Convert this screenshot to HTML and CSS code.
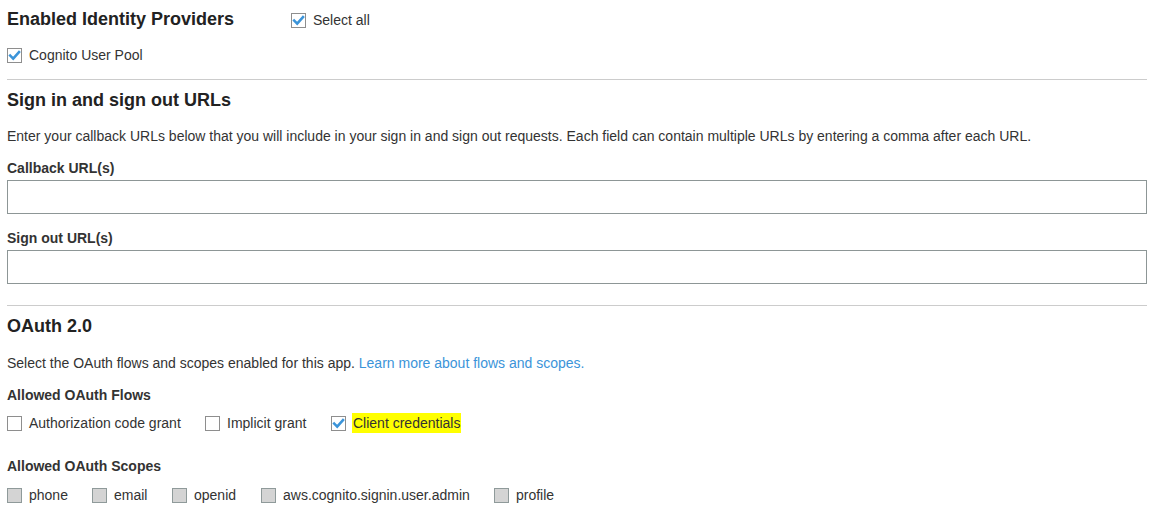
FILE: index.html
```html
<!DOCTYPE html>
<html>
<head>
<meta charset="utf-8">
<link rel="stylesheet" href="styles.css">
</head>
<body>
<div class="page">
  <section class="section first">
    <div class="head-row">
      <h2 class="title">Enabled Identity Providers</h2>
      <label class="check sel"><span class="box checked"><svg viewBox="0 0 15 15" width="15" height="15"><path d="M3.2 7.6 L6.2 10.6 L12 4.2" fill="none" stroke="#3b94d9" stroke-width="2.6" stroke-linecap="square"/></svg></span>Select all</label>
    </div>
    <div class="row provider">
      <label class="check"><span class="box checked"><svg viewBox="0 0 15 15" width="15" height="15"><path d="M3.2 7.6 L6.2 10.6 L12 4.2" fill="none" stroke="#3b94d9" stroke-width="2.6" stroke-linecap="square"/></svg></span>Cognito User Pool</label>
    </div>
  </section>
  <section class="section urls">
    <h2 class="title">Sign in and sign out URLs</h2>
    <p class="desc">Enter your callback URLs below that you will include in your sign in and sign out requests. Each field can contain multiple URLs by entering a comma after each URL.</p>
    <div class="field">
      <div class="label">Callback URL(s)</div>
      <div class="input"></div>
    </div>
    <div class="field">
      <div class="label">Sign out URL(s)</div>
      <div class="input"></div>
    </div>
  </section>
  <section class="section oauth">
    <h2 class="title">OAuth 2.0</h2>
    <p class="desc">Select the OAuth flows and scopes enabled for this app. <a class="link">Learn more about flows and scopes.</a></p>
    <div class="label">Allowed OAuth Flows</div>
    <div class="row flows">
      <label class="check"><span class="box"></span>Authorization code grant</label>
      <label class="check"><span class="box"></span>Implicit grant</label>
      <label class="check"><span class="box checked"><svg viewBox="0 0 15 15" width="15" height="15"><path d="M3.2 7.6 L6.2 10.6 L12 4.2" fill="none" stroke="#3b94d9" stroke-width="2.6" stroke-linecap="square"/></svg></span><span class="hl">Client credentials</span></label>
    </div>
    <div class="label scopes-label">Allowed OAuth Scopes</div>
    <div class="row scopes">
      <label class="check"><span class="box disabled"></span>phone</label>
      <label class="check"><span class="box disabled"></span>email</label>
      <label class="check"><span class="box disabled"></span>openid</label>
      <label class="check"><span class="box disabled"></span>aws.cognito.signin.user.admin</label>
      <label class="check"><span class="box disabled"></span>profile</label>
    </div>
  </section>
</div>
</body>
</html>
```

FILE: styles.css
```css
html, body {
  margin: 0;
  padding: 0;
  background: #fff;
}
body {
  font-family: "Liberation Sans", Arial, sans-serif;
  color: #333;
  font-size: 14px;
}
.page {
  padding: 0 7px;
}
.section {
  border-top: 1px solid #ccc;
}
.section.first {
  border-top: none;
  padding-top: 7px;
  padding-bottom: 14px;
}
.head-row {
  display: flex;
  align-items: center;
}
.title {
  font-size: 18px;
  font-weight: bold;
  color: #222;
  margin: 0;
  line-height: 22px;
}
.head-row .title {
  width: 284px;
}
.check.sel {
  margin-top: 3px;
}
.provider {
  margin-top: 15px;
}
.row {
  display: flex;
  align-items: center;
}
.check {
  display: inline-flex;
  align-items: center;
  font-size: 14px;
  line-height: 20px;
  color: #333;
}
.box {
  width: 15px;
  height: 15px;
  box-sizing: border-box;
  border: 1px solid #8e8e8e;
  background: #fff;
  margin-right: 7px;
  display: inline-flex;
  position: relative;
}
.box svg {
  position: absolute;
  left: -1px;
  top: -1px;
}
.box.disabled {
  background: #d4d4d4;
  border-color: #8f9a9a;
}
.urls {
  padding-top: 9px;
  padding-bottom: 21px;
}
.desc {
  margin: 15px 0 0;
  line-height: 20px;
  font-size: 14px;
  color: #333;
}
.field {
  margin-top: 14px;
}
.field + .field {
  margin-top: 16px;
}
.label {
  font-size: 14px;
  font-weight: bold;
  color: #333;
  line-height: 16px;
}
.input {
  margin-top: 4px;
  height: 34px;
  box-sizing: border-box;
  border: 1px solid #8d9696;
  background: #fff;
}
.oauth {
  padding-top: 9px;
}
.oauth .desc {
  margin-top: 16px;
  margin-bottom: 14px;
}
.link {
  color: #3b94d9;
  text-decoration: none;
}
.flows {
  margin-top: 10px;
}
.flows .check:nth-child(1) {
  width: 198px;
}
.flows .check:nth-child(2) {
  width: 126px;
}
.hl {
  background: #ffff00;
  padding: 0 1px 0 1px;
  margin-left: -1px;
}
.scopes-label {
  margin-top: 25px;
}
.scopes {
  margin-top: 11px;
}
.scopes .check:nth-child(1) { width: 85px; }
.scopes .check:nth-child(2) { width: 80px; }
.scopes .check:nth-child(3) { width: 89px; }
.scopes .check:nth-child(4) { width: 233px; }
```
